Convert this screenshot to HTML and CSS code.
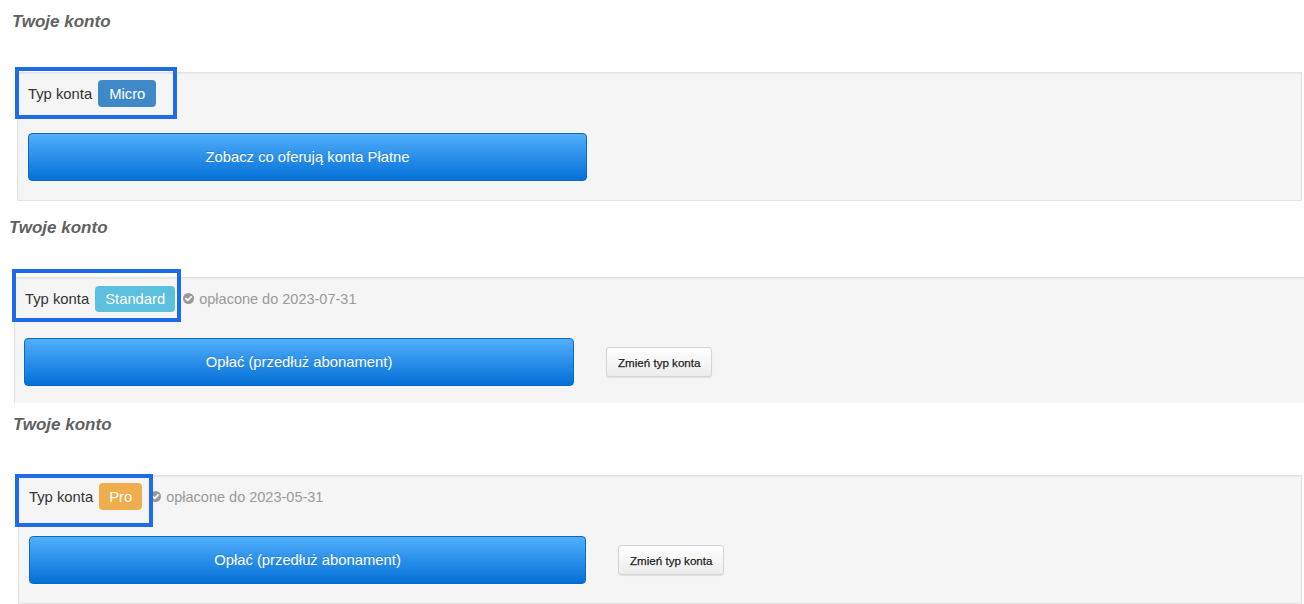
FILE: index.html
```html
<!DOCTYPE html>
<html lang="pl">
<head>
<meta charset="utf-8">
<title>Twoje konto</title>
<link rel="stylesheet" href="styles.css">
</head>
<body>
  <section class="account account--micro">
    <h3 class="account__title">Twoje konto</h3>
    <div class="well">
      <div class="well__row">
        <span class="type-label">Typ konta</span>
        <span class="badge badge--micro">Micro</span>
      </div>
      <div class="well__actions">
        <button class="btn-pay">Zobacz co oferują konta Płatne</button>
      </div>
      <span class="highlight"></span>
    </div>
  </section>

  <section class="account account--standard">
    <h3 class="account__title">Twoje konto</h3>
    <div class="well">
      <div class="well__row">
        <span class="type-label">Typ konta</span>
        <span class="badge badge--standard">Standard</span>
        <span class="paid">
          <svg class="paid__icon" viewBox="0 0 12 12" width="11" height="11"><circle cx="6" cy="6" r="6" fill="#999"/><path d="M3.2 6.2 5.2 8.1 8.9 4.2" fill="none" stroke="#fff" stroke-width="1.8" stroke-linecap="round" stroke-linejoin="round"/></svg>
          opłacone do 2023-07-31
        </span>
      </div>
      <div class="well__actions">
        <button class="btn-pay">Opłać (przedłuż abonament)</button>
        <button class="btn-change">Zmień typ konta</button>
      </div>
      <span class="highlight"></span>
    </div>
  </section>

  <section class="account account--pro">
    <h3 class="account__title">Twoje konto</h3>
    <div class="well">
      <div class="well__row">
        <span class="type-label">Typ konta</span>
        <span class="badge badge--pro">Pro</span>
        <span class="paid">
          <svg class="paid__icon" viewBox="0 0 12 12" width="11" height="11"><circle cx="6" cy="6" r="6" fill="#999"/><path d="M3.2 6.2 5.2 8.1 8.9 4.2" fill="none" stroke="#fff" stroke-width="1.8" stroke-linecap="round" stroke-linejoin="round"/></svg>
          opłacone do 2023-05-31
        </span>
      </div>
      <div class="well__actions">
        <button class="btn-pay">Opłać (przedłuż abonament)</button>
        <button class="btn-change">Zmień typ konta</button>
      </div>
      <span class="highlight"></span>
    </div>
  </section>
</body>
</html>
```

FILE: styles.css
```css
* { box-sizing: border-box; }

html, body {
  margin: 0;
  width: 1304px;
  height: 604px;
  overflow: hidden;
  background: #fff;
}

body {
  font-family: "Liberation Sans", Arial, sans-serif;
  color: #333;
}

.account__title {
  margin: 0;
  font-size: 17px;
  line-height: 20px;
  font-weight: bold;
  font-style: italic;
  color: #616161;
}

.well {
  position: relative;
  background: #f5f5f5;
  border: 1px solid #e3e3e3;
  box-shadow: inset 0 1px 1px rgba(0, 0, 0, 0.05);
  padding: 7px 10px 19px;
}

.well__row {
  display: flex;
  align-items: center;
  height: 27px;
}

.type-label {
  font-size: 14.8px;
  color: #333;
  margin-right: 6px;
}

.badge {
  display: inline-flex;
  align-items: center;
  height: 27px;
  padding: 0 11px;
  border-radius: 4px;
  color: #fff;
  font-size: 14.8px;
}
.badge--micro { background: #3f89c9; }
.badge--standard { background: #5bc0de; height: 26px; padding: 0 10px; }
.badge--pro { background: #f0ad4e; padding: 0 10px; }

.paid {
  display: inline-flex;
  align-items: center;
  margin-left: 8px;
  font-size: 14.5px;
  color: #9a9a9a;
}
.paid__icon { margin-right: 5px; }

.well__actions {
  display: flex;
  align-items: center;
  gap: 32px;
  margin-top: 26px;
}

.btn-pay {
  height: 48px;
  border: 1px solid #0a69c6;
  border-radius: 4px;
  background: linear-gradient(to bottom, #52affa 0%, #2a8fea 50%, #0470d6 100%);
  color: #fff;
  font-family: "Liberation Sans", Arial, sans-serif;
  font-size: 14.8px;
  text-shadow: 0 -1px 0 rgba(0, 0, 0, 0.15);
  padding: 0;
  cursor: pointer;
}

.btn-change {
  height: 30px;
  padding: 0 11px;
  border: 1px solid #d4d4d4;
  border-radius: 3px;
  background: linear-gradient(to bottom, #fff 0%, #ececec 100%);
  box-shadow: 0 1px 1px rgba(0, 0, 0, 0.08);
  color: #222;
  font-family: "Liberation Sans", Arial, sans-serif;
  font-size: 11.6px;
  font-weight: normal;
  -webkit-text-stroke: 0.25px #222;
  text-shadow: 0 1px 0 #fff;
}

.highlight {
  position: absolute;
  border: 4px solid #1f6ae6;
  pointer-events: none;
}

/* Micro */
.account--micro { padding: 12px 0 0 12px; height: 201px; }
.account--micro .well { margin: 40px 2px 0 5px; }
.account--micro .btn-pay { width: 559px; }
.account--micro .highlight { left: -3px; top: -6px; width: 162px; height: 52px; }

/* Standard */
.account--standard { padding: 17px 0 0 9px; height: 202px; overflow: hidden; }
.account--standard .well { margin: 39px 0 0 5px; border-right: none; border-bottom: none; }
.account--standard .btn-pay { width: 550px; margin-left: -1px; }
.account--standard .highlight { left: -3px; top: -9px; width: 169px; height: 53px; }

/* Pro */
.account--pro { padding: 12px 0 0 13px; }
.account--pro .well { margin: 40px 2px 0 5px; }
.account--pro .btn-pay { width: 557px; }
.account--pro .highlight { left: -4px; top: -2px; width: 138px; height: 53px; }
```
